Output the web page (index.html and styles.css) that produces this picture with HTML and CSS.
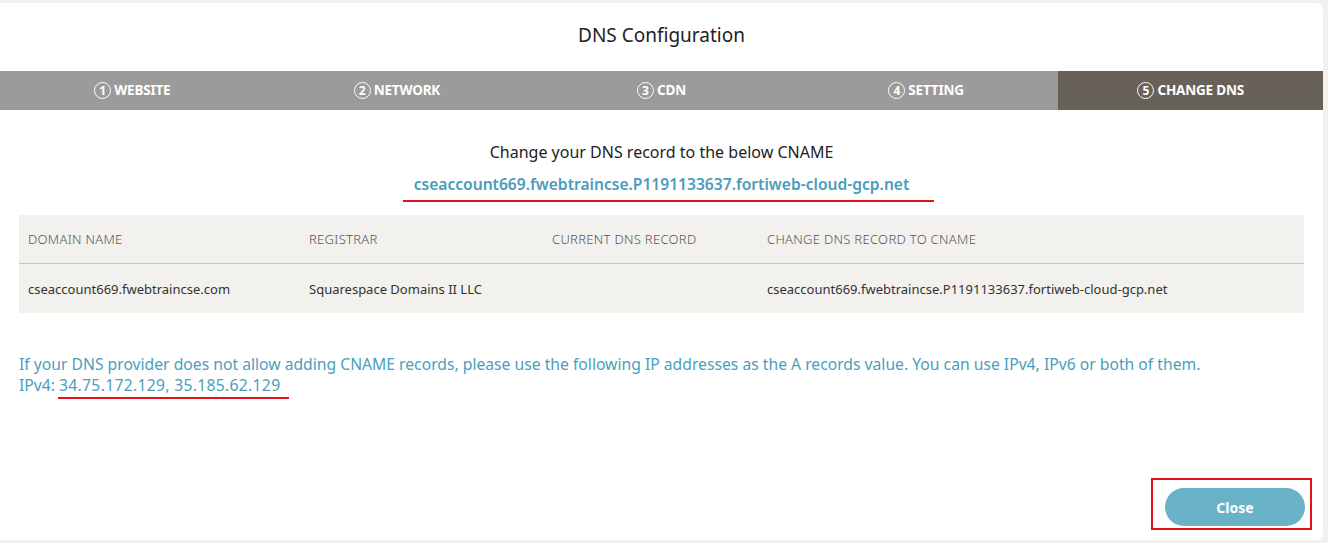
FILE: index.html
```html
<!DOCTYPE html>
<html>
<head>
<meta charset="utf-8">
<link rel="stylesheet" href="styles.css">
</head>
<body>
<div class="modal">
  <div class="header">DNS Configuration</div>
  <div class="tabs">
    <div class="tab"><span class="num">1</span>WEBSITE</div>
    <div class="tab"><span class="num">2</span>NETWORK</div>
    <div class="tab"><span class="num">3</span>CDN</div>
    <div class="tab"><span class="num">4</span>SETTING</div>
    <div class="tab active"><span class="num">5</span>CHANGE DNS</div>
  </div>
  <div class="content">
    <div class="intro">Change your DNS record to the below CNAME</div>
    <div class="cname"><span class="mark">cseaccount669.fwebtraincse.P1191133637.fortiweb-cloud-gcp.net</span></div>
    <div class="table">
      <div class="row head">
        <div class="c1">DOMAIN NAME</div>
        <div class="c2">REGISTRAR</div>
        <div class="c3">CURRENT DNS RECORD</div>
        <div class="c4">CHANGE DNS RECORD TO CNAME</div>
      </div>
      <div class="row body">
        <div class="c1">cseaccount669.fwebtraincse.com</div>
        <div class="c2">Squarespace Domains II LLC</div>
        <div class="c3"></div>
        <div class="c4">cseaccount669.fwebtraincse.P1191133637.fortiweb-cloud-gcp.net</div>
      </div>
    </div>
    <p class="note">If your DNS provider does not allow adding CNAME records, please use the following IP addresses as the A records value. You can use IPv4, IPv6 or both of them.<br>IPv4: <span class="ipmark">34.75.172.129, 35.185.62.129</span></p>
  </div>
  <div class="footer">
    <div class="btnbox"><button class="close">Close</button></div>
  </div>
</div>
</body>
</html>
```
FILE: styles.css
```css
html, body {
  margin: 0;
  padding: 0;
  background: #f2f1ee;
  font-family: "Noto Sans", "DejaVu Sans", sans-serif;
}
body {
  padding-top: 3px;
  height: 540px;
  overflow: hidden;
}
.modal {
  width: 1323px;
  height: 537px;
  background: #fff;
  border-radius: 0 7px 7px 0;
  display: flex;
  flex-direction: column;
}
.header {
  height: 68px;
  box-sizing: border-box;
  padding-bottom: 5px;
  display: flex;
  align-items: center;
  justify-content: center;
  font-size: 19px;
  color: #222;
}
.tabs {
  display: flex;
  height: 39px;
  background: #9b9b9b;
}
.tab {
  flex: 1;
  display: flex;
  align-items: center;
  justify-content: center;
  color: #fff;
  font-size: 13.5px;
  font-weight: bold;
  letter-spacing: -0.2px;
  padding-bottom: 1px;
}
.tab.active {
  background: #686159;
}
.num {
  display: inline-flex;
  align-items: center;
  justify-content: center;
  width: 17px;
  height: 17px;
  border: 1.4px solid #fff;
  border-radius: 50%;
  font-size: 12px;
  font-weight: bold;
  margin-right: 3px;
  box-sizing: border-box;
  letter-spacing: 0;
}
.content {
  padding: 0 19px 0 19px;
  flex: 1;
}
.intro {
  text-align: center;
  margin-top: 32px;
  font-size: 16px;
  color: #222;
  line-height: 20px;
}
.cname {
  text-align: center;
  margin-top: 12px;
  font-size: 15.6px;
  color: #4a9dba;
  font-weight: 600;
  line-height: 20px;
}
.mark {
  display: inline-block;
  border-bottom: 2px solid #e3131b;
  padding: 0 25px 6px 11px;
  margin-left: 14px;
}
.table {
  margin-top: 13px;
  background: #f2f1ee;
  font-size: 13px;
  color: #333;
}
.row {
  display: flex;
  align-items: center;
}
.row.head {
  height: 48px;
  border-bottom: 1px solid #c9c6bf;
  color: #555;
  font-weight: 300;
  letter-spacing: 0.3px;
}
.row.body {
  height: 49px;
}
.c1 { width: 281px; padding-left: 9px; }
.c2 { width: 243px; }
.c3 { width: 215px; }
.c4 { flex: 1; }
.note {
  margin: 41px 0 0 0;
  font-size: 15.7px;
  line-height: 21px;
  color: #4aa0bc;
}
.ipmark {
  display: inline-block;
  border-bottom: 2px solid #e3131b;
  line-height: 20px;
  padding: 0 9px 2px 1px;
  margin-left: -1px;
  letter-spacing: 0.3px;
}
.footer {
  display: flex;
  justify-content: flex-end;
  padding: 0 11px 10px 0;
}
.btnbox {
  border: 2px solid #e3131b;
  padding: 8px 5px 2px 12px;
}
.close {
  width: 140px;
  height: 38px;
  border: none;
  border-radius: 19px;
  background: #6ab2c8;
  color: #fff;
  font-family: inherit;
  font-size: 14px;
  font-weight: bold;
}
```
